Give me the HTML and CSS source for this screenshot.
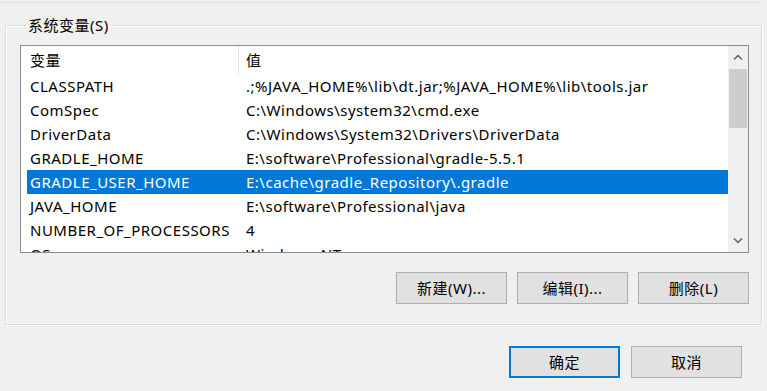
FILE: index.html
```html
<!DOCTYPE html>
<html lang="zh-CN">
<head>
    <meta charset="UTF-8">
    <title>环境变量</title>
    <link rel="stylesheet" href="styles.css">
</head>
<body>
<div class="top-edge"></div>
<fieldset class="group">
    <legend class="group-title">系统变量(S)</legend>
    <div class="list">
        <div class="list-main">
            <div class="list-head">
                <div class="col-name">变量</div>
                <div class="col-value">值</div>
            </div>
            <div class="list-body">
                <div class="row"><div class="col-name">CLASSPATH</div><div class="col-value">.;%JAVA_HOME%\lib\dt.jar;%JAVA_HOME%\lib\tools.jar</div></div>
                <div class="row"><div class="col-name">ComSpec</div><div class="col-value">C:\Windows\system32\cmd.exe</div></div>
                <div class="row"><div class="col-name">DriverData</div><div class="col-value">C:\Windows\System32\Drivers\DriverData</div></div>
                <div class="row"><div class="col-name">GRADLE_HOME</div><div class="col-value">E:\software\Professional\gradle-5.5.1</div></div>
                <div class="row selected"><div class="col-name">GRADLE_USER_HOME</div><div class="col-value">E:\cache\gradle_Repository\.gradle</div></div>
                <div class="row"><div class="col-name">JAVA_HOME</div><div class="col-value">E:\software\Professional\java</div></div>
                <div class="row"><div class="col-name">NUMBER_OF_PROCESSORS</div><div class="col-value">4</div></div>
                <div class="row"><div class="col-name">OS</div><div class="col-value">Windows_NT</div></div>
            </div>
        </div>
        <div class="scrollbar">
            <div class="scroll-btn">
                <svg width="10" height="6" viewBox="0 0 10 6"><path d="M1 5.5 L5 1.5 L9 5.5" fill="none" stroke="#606060" stroke-width="1.5"/></svg>
            </div>
            <div class="scroll-thumb"></div>
            <div class="scroll-track"></div>
            <div class="scroll-btn">
                <svg width="10" height="6" viewBox="0 0 10 6"><path d="M1 0.5 L5 4.5 L9 0.5" fill="none" stroke="#606060" stroke-width="1.5"/></svg>
            </div>
        </div>
    </div>
    <div class="actions">
        <div class="button">新建(W)...</div>
        <div class="button">编辑(I)...</div>
        <div class="button">删除(L)</div>
    </div>
</fieldset>
<div class="footer">
    <div class="button default">确定</div>
    <div class="button">取消</div>
</div>
</body>
</html>
```

FILE: styles.css
```css
body {
    margin: 0;
    background: #f0f0f0;
    color: #000000;
    font-family: "Noto Sans", "Noto Sans CJK SC", sans-serif;
    font-size: 15px;
    letter-spacing: 0.5px;
    width: 767px;
    height: 391px;
    overflow: hidden;
}

.top-edge {
    height: 2px;
    margin: 0 4px 0 0;
    border-bottom: 1px solid #e3e3e3;
}

.group {
    margin: 12px 5px 0 5px;
    padding: 0 12px 20px 14px;
    border: 1px solid #dcdcdc;
    box-shadow: inset 1px 1px 0 #ffffff, 1px 1px 0 #ffffff;
}

.group-title {
    padding: 0 2px;
    margin-left: 6px;
    line-height: 20px;
}

.list {
    display: flex;
    margin-top: 10px;
    height: 206px;
    border: 1px solid #8d8d8d;
    background: #ffffff;
}

.list-main {
    flex: 1;
    overflow: hidden;
}

.list-head {
    display: flex;
    height: 28px;
    line-height: 28px;
    margin-left: 6px;
}

.list-head .col-name {
    border-right: 1px solid #e5e5e5;
    width: 208px;
}

.list-head .col-value {
    padding-left: 7px;
}

.row {
    display: flex;
    height: 24px;
    line-height: 24px;
    margin-left: 6px;
    white-space: nowrap;
}

.row.selected {
    background: #0078d7;
    color: #ffffff;
}

.col-name {
    width: 213px;
    padding-left: 3px;
    flex-shrink: 0;
}

.col-value {
    padding-left: 3px;
}

.scrollbar {
    display: flex;
    flex-direction: column;
    width: 20px;
    background: #f0f0f0;
}

.scroll-btn {
    height: 22px;
    display: flex;
    align-items: center;
    justify-content: center;
}

.scroll-thumb {
    height: 59px;
    margin: 1px 1px 0 1px;
    background: #cdcdcd;
}

.scroll-track {
    flex: 1;
}

.actions {
    display: flex;
    justify-content: flex-end;
    gap: 10px;
    margin-top: 19px;
}

.button {
    width: 109px;
    height: 30px;
    line-height: 30px;
    text-align: center;
    background: #e1e1e1;
    border: 1px solid #adadad;
}

.button.default {
    border: 2px solid #0078d7;
    width: 107px;
    height: 28px;
    line-height: 28px;
}

.footer {
    display: flex;
    justify-content: flex-end;
    gap: 11px;
    margin: 21px 25px 0 0;
}
```
